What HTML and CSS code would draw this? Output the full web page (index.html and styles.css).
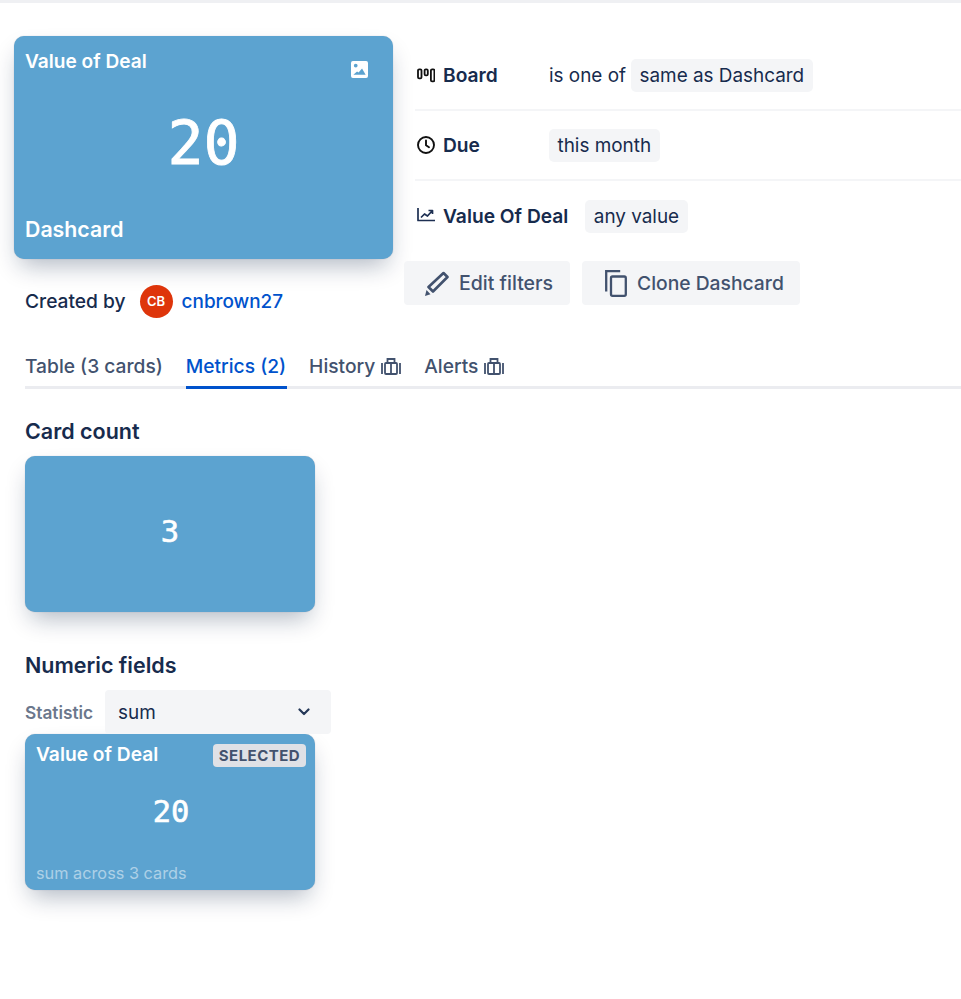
FILE: index.html
```html
<!DOCTYPE html>
<html lang="en">
<head>
<meta charset="utf-8">
<title>Dashcard</title>
<link rel="stylesheet" href="styles.css">
</head>
<body>
<div class="top-rule"></div>
<main class="page">
  <section class="summary">
    <div class="summary-left">
      <div class="card card-hero">
        <div class="hero-head">
          <span class="card-title">Value of Deal</span>
          <svg class="hero-icon" viewBox="0 0 18 18"><path fill-rule="evenodd" fill="#fff" d="M2 0h14a2 2 0 0 1 2 2v14a2 2 0 0 1-2 2H2a2 2 0 0 1-2-2V2a2 2 0 0 1 2-2zM5 2.800a2 2 0 1 0 0 4 2 2 0 0 0 0-4zM2.500 14.500h13l-3.800-6.500-3.700 4.200-1.600-1.200z"/></svg>
        </div>
        <div class="hero-value">20</div>
        <div class="hero-foot">Dashcard</div>
      </div>
      <div class="created">
        <span>Created by</span>
        <span class="avatar">CB</span>
        <a class="user">cnbrown27</a>
      </div>
    </div>
    <div class="summary-right">
      <div class="filter-row">
        <svg class="f-icon" viewBox="0 0 18 18"><g fill="none" stroke="#111" stroke-width="1.800"><rect x="1" y="3.400" width="3.500" height="9" rx="1.200"/><rect x="7.600" y="3.400" width="3.200" height="6" rx="1.200"/><rect x="13.900" y="3.400" width="3.500" height="12" rx="1.200"/></g></svg>
        <span class="f-name f-name-w">Board</span>
        <span class="f-op">is one of</span>
        <span class="chip">same as Dashcard</span>
      </div>
      <div class="filter-row">
        <svg class="f-icon" viewBox="0 0 18 18"><g fill="none" stroke="#111" stroke-width="1.900" stroke-linecap="round" stroke-linejoin="round"><circle cx="9" cy="9" r="8"/><path d="M9 4.500v4.800l3 2"/></g></svg>
        <span class="f-name f-name-w">Due</span>
        <span class="chip">this month</span>
      </div>
      <div class="filter-row last">
        <svg class="f-icon" viewBox="0 0 18 18"><g fill="none" stroke="#1d2f52" stroke-width="1.700" stroke-linejoin="round"><path d="M1 1v12.500h17"/><path d="M4 10.500l3.500-3.500 3 2 4.500-5M11.500 3.500h4V7"/></g></svg>
        <span class="f-name f-name-gap">Value Of Deal</span>
        <span class="chip">any value</span>
      </div>
      <div class="actions">
        <button class="btn btn-edit">
          <svg class="btn-edit-icon" viewBox="0 0 24 25"><path fill="none" stroke="#42526e" stroke-width="2.600" stroke-linejoin="round" d="M18.500 2l4 4L8 20.500l-4.500-4.500z"/><path fill="#42526e" d="M1.500 19l4 4.200L0 25z"/></svg>
          Edit filters
        </button>
        <button class="btn btn-clone">
          <svg class="btn-clone-icon" viewBox="0 0 22 27"><g fill="none" stroke="#42526e" stroke-width="2.300"><path d="M1.200 21.500V1.200h14"/><rect x="6" y="6.500" width="14.800" height="19.300" rx="1.500"/></g></svg>
          Clone Dashcard
        </button>
      </div>
    </div>
  </section>

  <nav class="tabs">
    <a class="tab">Table (3 cards)</a>
    <a class="tab active">Metrics (2)</a>
    <a class="tab">History <svg class="lock" viewBox="0 0 20 17"><g fill="none" stroke="#42526e" stroke-width="1.800"><path d="M1 5v11M19 5v11"/><rect x="4" y="5" width="12" height="11" rx="1"/><path d="M10 5v11"/><path d="M6.500 4.500V1h7v3.500"/></g></svg></a>
    <a class="tab">Alerts <svg class="lock" viewBox="0 0 20 17"><g fill="none" stroke="#42526e" stroke-width="1.800"><path d="M1 5v11M19 5v11"/><rect x="4" y="5" width="12" height="11" rx="1"/><path d="M10 5v11"/><path d="M6.500 4.500V1h7v3.500"/></g></svg></a>
  </nav>

  <h2 class="section-title first">Card count</h2>
  <div class="card card-metric card-plain"><span class="metric-value small">3</span></div>

  <h2 class="section-title second">Numeric fields</h2>
  <div class="stat-row">
    <span class="stat-label">Statistic</span>
    <div class="select">
      <span>sum</span>
      <svg class="chev" viewBox="0 0 12 8"><path d="M1.500 1.500 6 6l4.500-4.500" fill="none" stroke="#253858" stroke-width="2.200" stroke-linecap="round" stroke-linejoin="round"/></svg>
    </div>
  </div>
  <div class="card card-metric card-field">
    <div class="field-head">
      <span class="field-title">Value of Deal</span>
      <span class="badge">SELECTED</span>
    </div>
    <div class="metric-value">20</div>
    <div class="field-foot">sum across 3 cards</div>
  </div>
</main>
</body>
</html>
```

FILE: styles.css
```css
* { box-sizing: border-box; }
html, body { margin: 0; background: #fff; }
body {
  font-family: Inter, "Noto Sans", sans-serif;
  font-size: 18.900px;
  color: #172b4d;
  height: 999px;
  overflow: hidden;
}
.top-rule { height: 3px; background: #eff0f3; }
.page { padding: 33px 0 0 25px; }

.summary { display: flex; margin-left: -11px; }
.summary-left { width: 379px; flex: none; }
.summary-right { margin-left: 22px; flex: 1; }

.card {
  background: #5ca3d0;
  color: #fff;
  border-radius: 10px;
  box-shadow: 0 12px 24px -6px rgba(9, 30, 66, .32), 0 0 1px rgba(9, 30, 66, .3);
}
.card-hero {
  height: 223px;
  padding: 12px 11px 16px;
  display: flex;
  flex-direction: column;
}
.hero-head { display: flex; justify-content: space-between; align-items: flex-start; height: 39px; }
.card-title { font-weight: 600; font-size: 19.100px; line-height: 26px; }
.hero-icon { width: 17px; height: 17px; margin: 13px 14px 0 0; }
.hero-value {
  font-family: "DejaVu Sans Mono", monospace;
  font-size: 60px;
  -webkit-text-stroke: 0.8px #fff;
  line-height: 66px;
  text-align: center;
  margin-top: 23px;
}
.hero-foot { margin-top: auto; font-weight: 600; font-size: 21.300px; line-height: 28px; }

.created { display: flex; align-items: center; margin: 25px 0 0 11px; font-weight: 500; height: 34px; font-size: 19.200px; }
.avatar {
  width: 33px; height: 33px; border-radius: 50%;
  background: #de350b; color: #fff;
  font-size: 13px; font-weight: 600;
  display: flex; align-items: center; justify-content: center;
  margin: 0 9px 0 14px;
}
.user { color: #0052cc; font-weight: 500; font-size: 18.900px; }

.filter-row {
  display: flex; align-items: center;
  height: 70px;
  border-bottom: 2px solid #f4f5f7;
}
.summary-right .filter-row:first-child { margin-top: 5px; }
.filter-row.last { border-bottom: 0; }
.f-icon { width: 18px; height: 18px; flex: none; margin: 0 8px 0 2px; }
.f-name { font-weight: 600; font-size: 19.200px; }
.f-name-w { width: 106px; }
.f-name-gap { margin-right: 17px; }
.f-op { margin-right: 5px; }
.chip { background: #f4f5f7; border-radius: 5px; padding: 0 8.500px; line-height: 33px; height: 33px; }

.actions { display: flex; gap: 12px; margin: 10px 0 0 -11px; }
.btn {
  display: flex; align-items: center;
  height: 44px; border: 0; border-radius: 4px;
  background: #f4f5f7; color: #42526e;
  font: 500 19.500px Inter, sans-serif;
}
.btn-edit { width: 166px; padding: 0 0 0 21px; gap: 10px; }
.btn-clone { width: 218px; padding: 0 0 0 23px; gap: 10px; font-size: 19.300px; }
.btn-edit-icon { width: 24px; height: 25px; }
.btn-clone-icon { width: 22px; height: 27px; }

.tabs { display: flex; gap: 23px; margin-top: 27px; border-bottom: 3px solid #ebecf0; height: 44px; }
.tab {
  display: flex; align-items: center; gap: 6px;
  height: 44px; color: #42526e; font-weight: 500; font-size: 19.200px;
  padding-bottom: 2px;
  flex: none;
}
.tab.active { color: #0052cc; box-shadow: inset 0 -3px 0 #0052cc; padding-right: 1px; margin-right: -1px; }
.lock { width: 20px; height: 17px; }

.section-title { margin: 0; font-size: 21.500px; font-weight: 600; line-height: 28px; color: #172b4d; }
.section-title.first { margin-top: 28px; }
.section-title.second { margin-top: 39px; }

.card-metric { width: 290px; height: 156px; }
.card-plain { margin-top: 11px; display: flex; align-items: center; justify-content: center; }
.metric-value { font-family: "DejaVu Sans Mono", monospace; font-size: 30.500px; -webkit-text-stroke: 0.6px #fff; line-height: 36px; text-align: center; }
.metric-value.small { margin-bottom: 5px; }

.stat-row { display: flex; align-items: center; margin-top: 11px; height: 44px; }
.stat-label { font-size: 17.300px; font-weight: 600; color: #6b778c; width: 80px; }
.select {
  width: 226px; height: 44px; border-radius: 4px; background: #f4f5f7;
  display: flex; align-items: center; justify-content: space-between; padding: 0 21px 0 13px;
}
.chev { width: 12px; height: 8px; }

.card-field { margin-top: 0; padding: 9px 9px 5px 11px; display: flex; flex-direction: column; }
.field-head { display: flex; justify-content: space-between; align-items: flex-start; height: 42px; }
.field-title { font-weight: 600; font-size: 19.200px; margin-top: -1px; }
.badge {
  background: #dfe1e6; color: #42526e; font-size: 15px; font-weight: 700;
  letter-spacing: .45px; border-radius: 4px; padding: 0 6px; line-height: 23px; margin-top: 1px;
}
.card-field .metric-value { margin-top: 9px; }
.field-foot { margin-top: auto; font-size: 16.300px; color: rgba(255, 255, 255, .5); line-height: 24px; }
```
